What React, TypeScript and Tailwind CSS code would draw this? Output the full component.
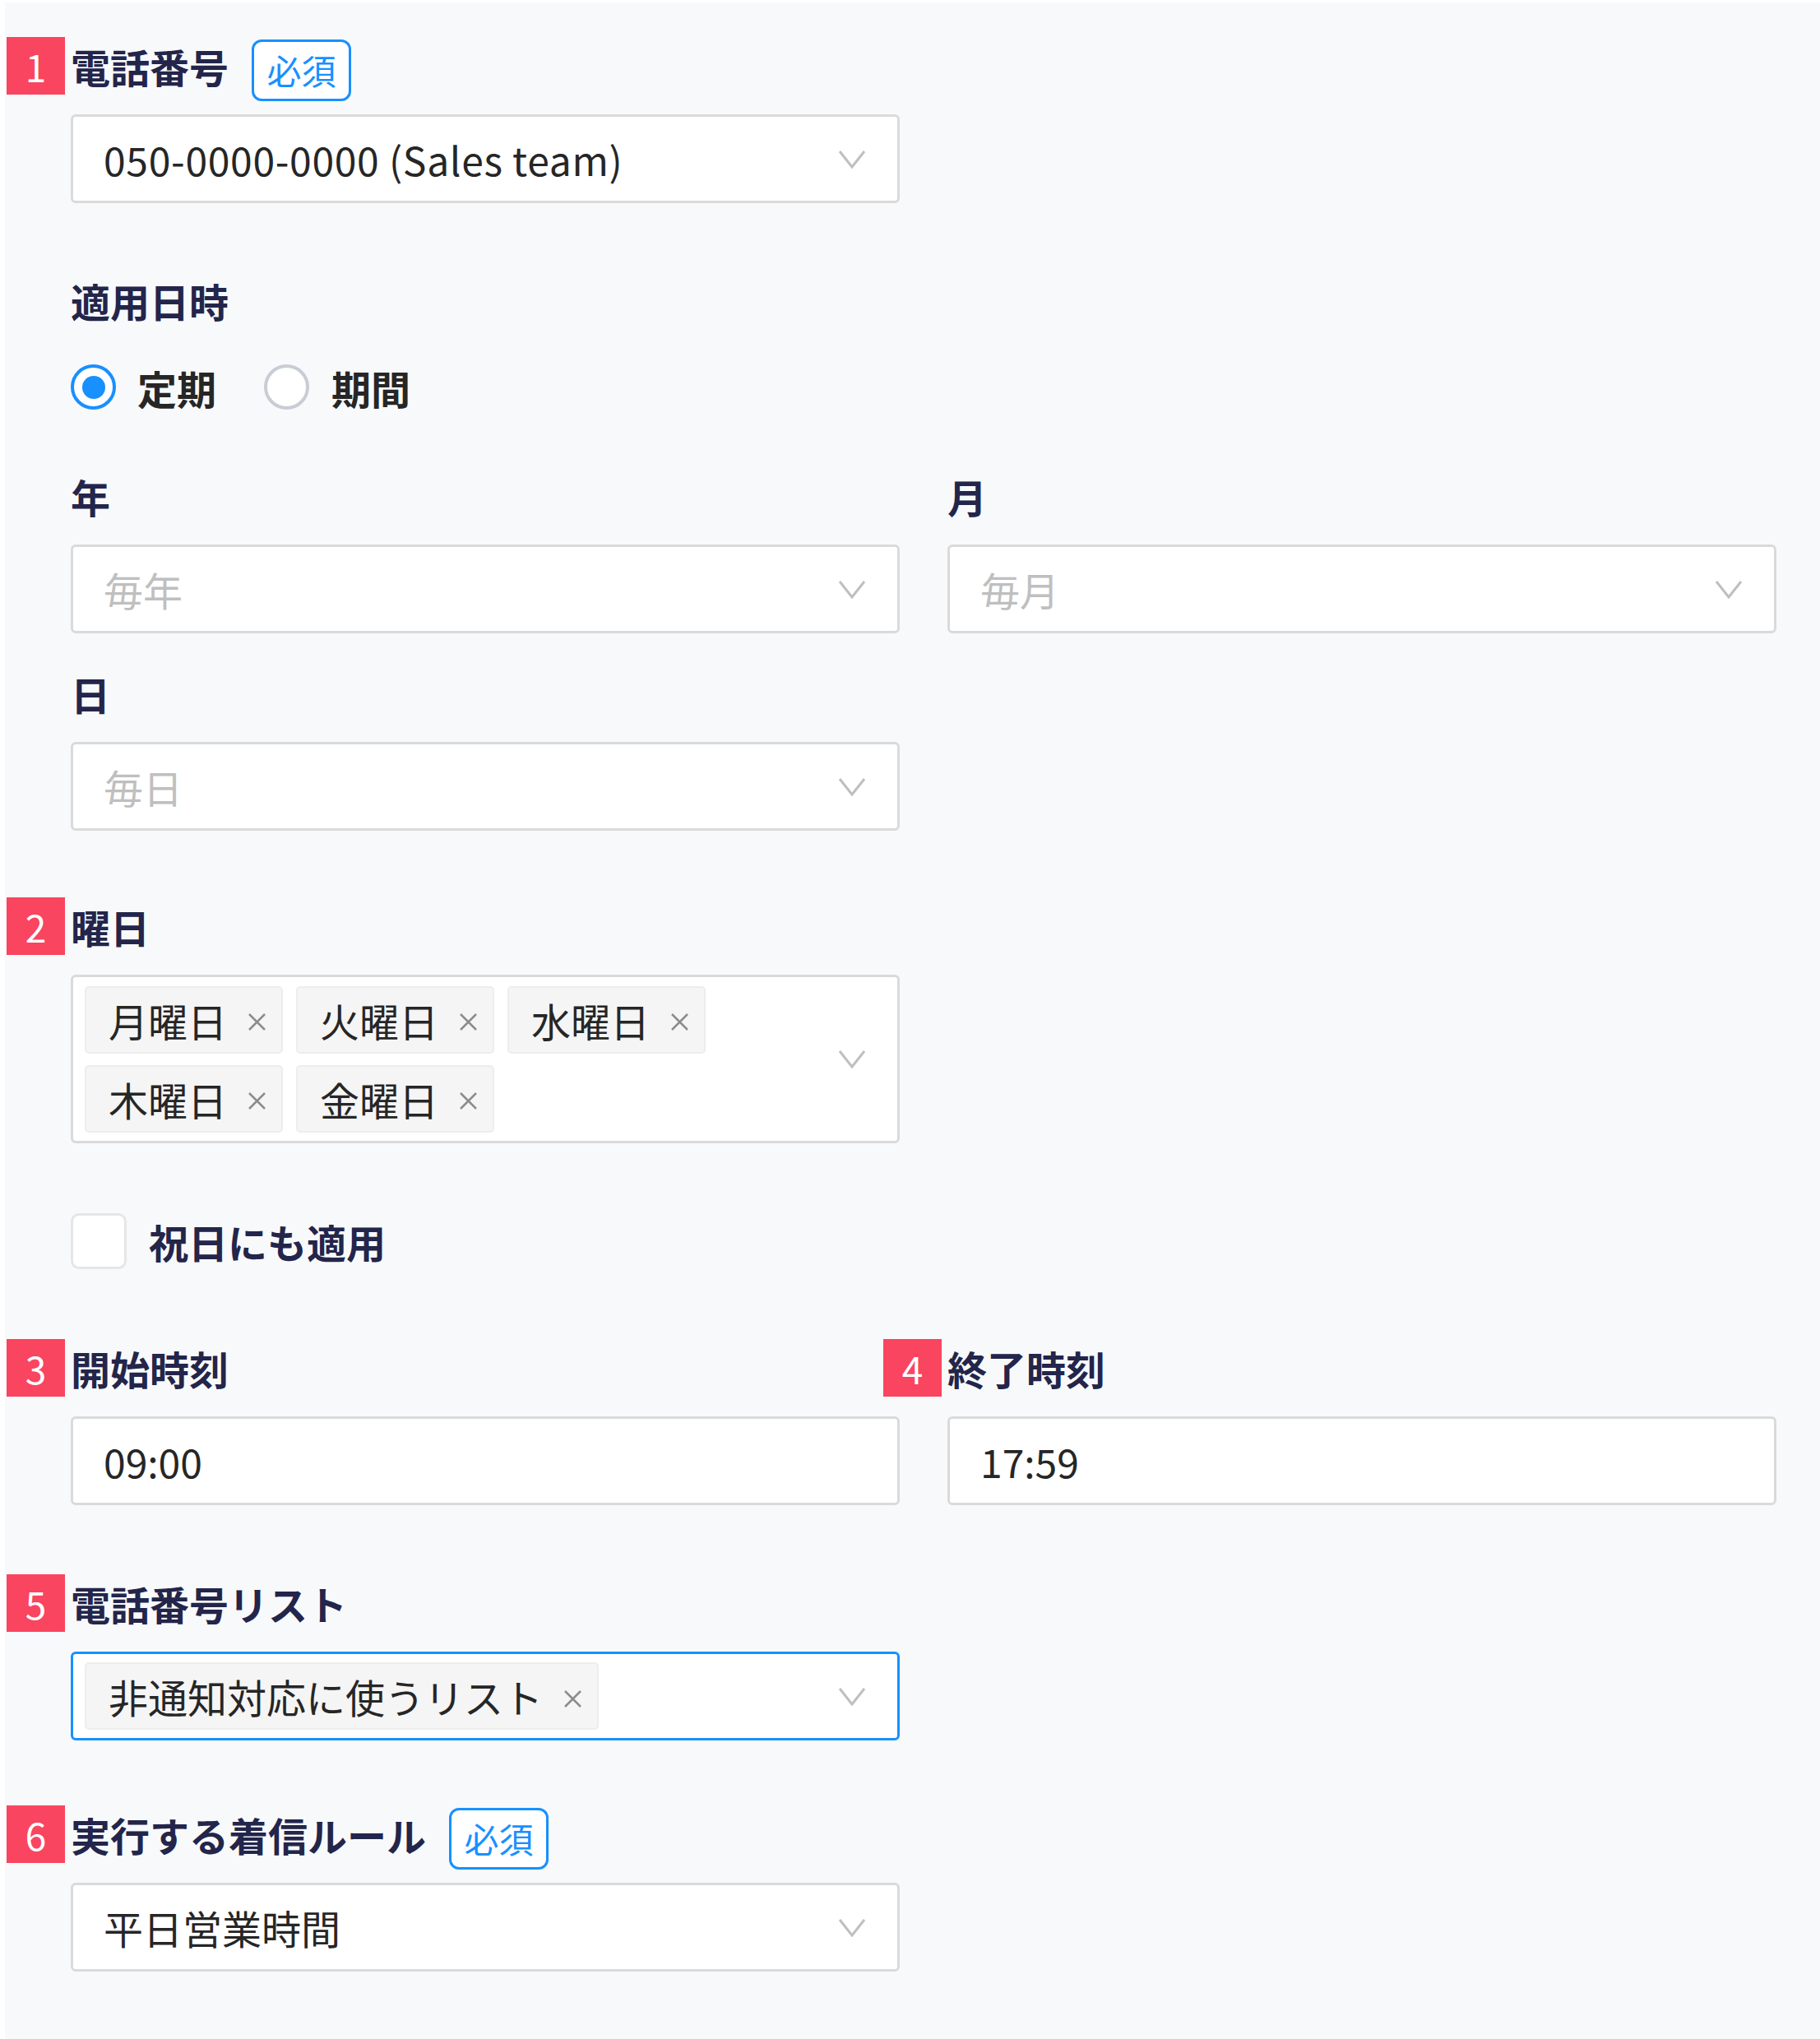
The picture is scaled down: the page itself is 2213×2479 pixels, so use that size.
import React from 'react';

const FONT = "font-['Noto_Sans_CJK_JP','Noto_Sans',sans-serif]";

function Chevron() {
  return (
    <svg width="34" height="23" viewBox="0 0 34 23" fill="none">
      <path d="M2 2L17 21L32 2" stroke="#bfbfbf" strokeWidth="3" />
    </svg>
  );
}

function Cross() {
  return (
    <svg width="25" height="25" viewBox="0 0 25 25" fill="none">
      <path d="M3 3L22 22M22 3L3 22" stroke="#8c8c8c" strokeWidth="2.5" />
    </svg>
  );
}

function Label({ n, text, required }: { n?: string; text: string; required?: boolean }) {
  return (
    <div className="relative flex h-[70px] items-center">
      {n && (
        <span className="absolute top-0 right-full mr-[7px] flex h-[70px] w-[71px] items-center justify-center bg-[#f9455f] text-[46px] leading-none text-white">
          {n}
        </span>
      )}
      <span className="text-[48px] font-bold leading-[70px] text-[#23254a]">{text}</span>
      {required && (
        <span className="ml-[28px] mt-[10px] flex h-[75px] w-[121px] items-center justify-center rounded-[12px] border-[3px] border-[#1890ff] bg-white text-[42px] leading-none text-[#1890ff]">
          必須
        </span>
      )}
    </div>
  );
}

function Select({ value, placeholder, wide }: { value?: string; placeholder?: string; wide?: boolean }) {
  return (
    <div className="mt-[24px] flex h-[108px] w-[1008px] items-center justify-between rounded-[6px] border-[3px] border-[#dadada] bg-white pl-[37px] pr-[38px]">
      {value ? (
        <span className={`text-[48px] leading-none text-[#262626] ${wide ? 'tracking-[0.7px]' : ''}`}>{value}</span>
      ) : (
        <span className="text-[48px] leading-none text-[#bfbfbf]">{placeholder}</span>
      )}
      <Chevron />
    </div>
  );
}

function TimeInput({ value }: { value: string }) {
  return (
    <div className="mt-[24px] flex h-[108px] w-[1008px] items-center rounded-[6px] border-[3px] border-[#dadada] bg-white pl-[37px]">
      <span className="text-[48px] leading-none text-[#262626]">{value}</span>
    </div>
  );
}

function Tag({ text }: { text: string }) {
  return (
    <span className="flex h-[82px] items-center rounded-[5px] border-2 border-[#ededed] bg-[#f5f5f5] pl-[27px] pr-[17px] text-[48px] leading-none text-[#262626]">
      {text}
      <span className="ml-[24px] mt-[6px] flex">
        <Cross />
      </span>
    </span>
  );
}

export default function App() {
  const days = ['月曜日', '火曜日', '水曜日', '木曜日', '金曜日'];

  return (
    <div className={`min-h-[2479px] bg-white pl-[6px] pt-[3px] ${FONT}`}>
      <div className="min-h-[2476px] bg-[#f8f9fb] pb-[82px] pl-[80px] pt-[42px]">
        {/* 電話番号 */}
        <Label n="1" text="電話番号" required />
        <Select value="050-0000-0000 (Sales team)" wide />

        {/* 適用日時 */}
        <div className="mt-[83px]">
          <Label text="適用日時" />
        </div>
        <div className="mt-[43px] flex h-[55px] items-center">
          <span className="flex h-[55px] w-[55px] items-center justify-center rounded-full border-[4px] border-[#1890ff] bg-white">
            <span className="h-[28px] w-[28px] rounded-full bg-[#1890ff]" />
          </span>
          <span className="ml-[26px] text-[48px] font-bold leading-none text-[#262626]">定期</span>
          <span className="ml-[58px] h-[55px] w-[55px] rounded-full border-[4px] border-[#c8cdd5] bg-white" />
          <span className="ml-[27px] text-[48px] font-bold leading-none text-[#262626]">期間</span>
        </div>

        <div className="mt-[70px] grid grid-cols-[1008px_1008px] gap-x-[58px]">
          <div>
            <Label text="年" />
            <Select placeholder="毎年" />
          </div>
          <div>
            <Label text="月" />
            <Select placeholder="毎月" />
          </div>
        </div>

        <div className="mt-[38px]">
          <Label text="日" />
          <Select placeholder="毎日" />
        </div>

        {/* 曜日 */}
        <div className="mt-[81px]">
          <Label n="2" text="曜日" />
          <div className="mt-[24px] flex h-[205px] w-[1008px] items-center justify-between rounded-[6px] border-[3px] border-[#dadada] bg-white pl-[14px] pr-[38px]">
            <div className="flex w-[780px] flex-wrap gap-x-[16px] gap-y-[14px]">
              {days.map((d) => (
                <Tag key={d} text={d} />
              ))}
            </div>
            <Chevron />
          </div>
        </div>

        <div className="mt-[85px] flex h-[68px] items-center">
          <span className="h-[68px] w-[68px] rounded-[10px] border-[3px] border-[#e6e6e6] bg-white" />
          <span className="ml-[27px] text-[48px] font-bold leading-none text-[#23254a]">祝日にも適用</span>
        </div>

        {/* 時刻 */}
        <div className="mt-[85px] grid grid-cols-[1008px_1008px] gap-x-[58px]">
          <div>
            <Label n="3" text="開始時刻" />
            <TimeInput value="09:00" />
          </div>
          <div>
            <Label n="4" text="終了時刻" />
            <TimeInput value="17:59" />
          </div>
        </div>

        {/* 電話番号リスト */}
        <div className="mt-[84px]">
          <Label n="5" text="電話番号リスト" />
          <div className="mt-[24px] flex h-[108px] w-[1008px] items-center justify-between rounded-[6px] border-[3px] border-[#1890ff] bg-white pl-[14px] pr-[38px]">
            <Tag text="非通知対応に使うリスト" />
            <Chevron />
          </div>
        </div>

        {/* 実行する着信ルール */}
        <div className="mt-[79px]">
          <Label n="6" text="実行する着信ルール" required />
          <Select value="平日営業時間" />
        </div>
      </div>
    </div>
  );
}
